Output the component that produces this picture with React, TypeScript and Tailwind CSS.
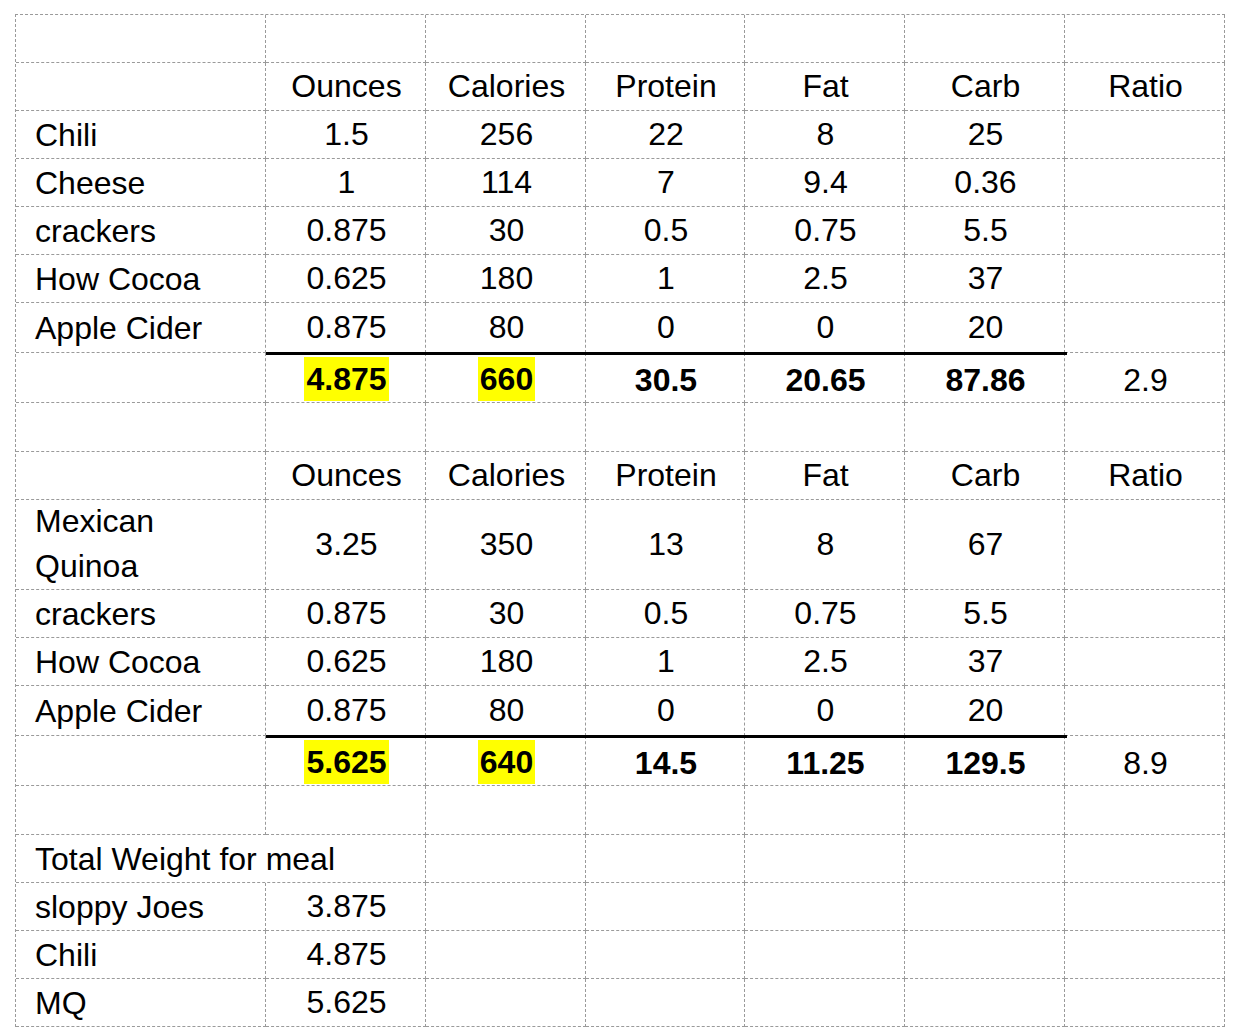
import React from 'react';

type RowKind = 'blank' | 'header' | 'item' | 'total' | 'title' | 'weight';

interface Row {
  kind: RowKind;
  h: string;
  cells: string[];
  marks?: number[];
  wrap?: boolean;
}

const header = ['', 'Ounces', 'Calories', 'Protein', 'Fat', 'Carb', 'Ratio'];
const blank = ['', '', '', '', '', '', ''];

const rows: Row[] = [
  { kind: 'blank', h: 'h-[48px]', cells: blank },
  { kind: 'header', h: 'h-[48px]', cells: header },
  { kind: 'item', h: 'h-[48px]', cells: ['Chili', '1.5', '256', '22', '8', '25', ''] },
  { kind: 'item', h: 'h-[48px]', cells: ['Cheese', '1', '114', '7', '9.4', '0.36', ''] },
  { kind: 'item', h: 'h-[48px]', cells: ['crackers', '0.875', '30', '0.5', '0.75', '5.5', ''] },
  { kind: 'item', h: 'h-[48px]', cells: ['How Cocoa', '0.625', '180', '1', '2.5', '37', ''] },
  { kind: 'item', h: 'h-[50px]', cells: ['Apple Cider', '0.875', '80', '0', '0', '20', ''] },
  { kind: 'total', h: 'h-[50px]', cells: ['', '4.875', '660', '30.5', '20.65', '87.86', '2.9'], marks: [1, 2] },
  { kind: 'blank', h: 'h-[49px]', cells: blank },
  { kind: 'header', h: 'h-[48px]', cells: header },
  { kind: 'item', h: 'h-[90px]', cells: ['Mexican Quinoa', '3.25', '350', '13', '8', '67', ''], wrap: true },
  { kind: 'item', h: 'h-[48px]', cells: ['crackers', '0.875', '30', '0.5', '0.75', '5.5', ''] },
  { kind: 'item', h: 'h-[48px]', cells: ['How Cocoa', '0.625', '180', '1', '2.5', '37', ''] },
  { kind: 'item', h: 'h-[50px]', cells: ['Apple Cider', '0.875', '80', '0', '0', '20', ''] },
  { kind: 'total', h: 'h-[50px]', cells: ['', '5.625', '640', '14.5', '11.25', '129.5', '8.9'], marks: [1, 2] },
  { kind: 'blank', h: 'h-[49px]', cells: blank },
  { kind: 'title', h: 'h-[48px]', cells: ['Total Weight for meal', '', '', '', '', ''] },
  { kind: 'weight', h: 'h-[48px]', cells: ['sloppy Joes', '3.875', '', '', '', '', ''] },
  { kind: 'weight', h: 'h-[48px]', cells: ['Chili', '4.875', '', '', '', '', ''] },
  { kind: 'weight', h: 'h-[48px]', cells: ['MQ', '5.625', '', '', '', '', ''] },
];

const cellBase = 'flex border-r border-b border-dashed border-[#9a9a9a]';

function Cell({ row, col, text }: { row: Row; col: number; text: string }) {
  const isLabel = col === 0;
  const span = row.kind === 'title' && col === 0 ? 'col-span-2' : '';
  const bold = row.kind === 'total' && col >= 1 && col <= 5;
  const marked = row.marks?.includes(col);

  if (bold) {
    // total cells carry the heavy rule along their top edge
    return (
      <div className={`${cellBase} ${row.h} flex-col`}>
        <div className={`h-[3px] -mt-px bg-black shrink-0 ${col === 5 ? '-mr-[3px]' : '-mr-px'}`} />
        <div className="flex flex-1 items-center justify-center pt-[1px] pl-[2px] font-bold">
          <span className={marked ? 'inline-block h-[44px] leading-[44px] px-[2px] bg-[#ffff00]' : ''}>{text}</span>
        </div>
      </div>
    );
  }

  const pad = isLabel
    ? 'justify-start pl-[19px] pt-[1px]'
    : row.kind === 'total'
      ? 'justify-center pl-[2px] pt-[4px]'
      : 'justify-center pl-[2px] pb-[2px]';

  return (
    <div className={`${cellBase} ${row.h} ${span} items-center ${pad}`}>
      {isLabel && row.wrap ? (
        <span className="block leading-[45px] w-[150px] -mt-[3px]">{text}</span>
      ) : (
        <span className="whitespace-nowrap">{text}</span>
      )}
    </div>
  );
}

export default function App() {
  return (
    <div className="min-h-[1027px] bg-white text-black font-['Liberation_Sans',Arial,sans-serif] text-[32px]">
      <div className="pt-[14px] pl-[15px]">
        <div className="grid grid-cols-[250px_160px_160px_159px_160px_160px_160px] w-fit border-l border-t border-dashed border-[#9a9a9a]">
          {rows.map((row, r) =>
            row.cells.map((text, c) => {
              const col = row.kind === 'title' && c > 0 ? c + 1 : c;
              return <Cell key={`${r}-${c}`} row={row} col={col} text={text} />;
            })
          )}
        </div>
      </div>
    </div>
  );
}
